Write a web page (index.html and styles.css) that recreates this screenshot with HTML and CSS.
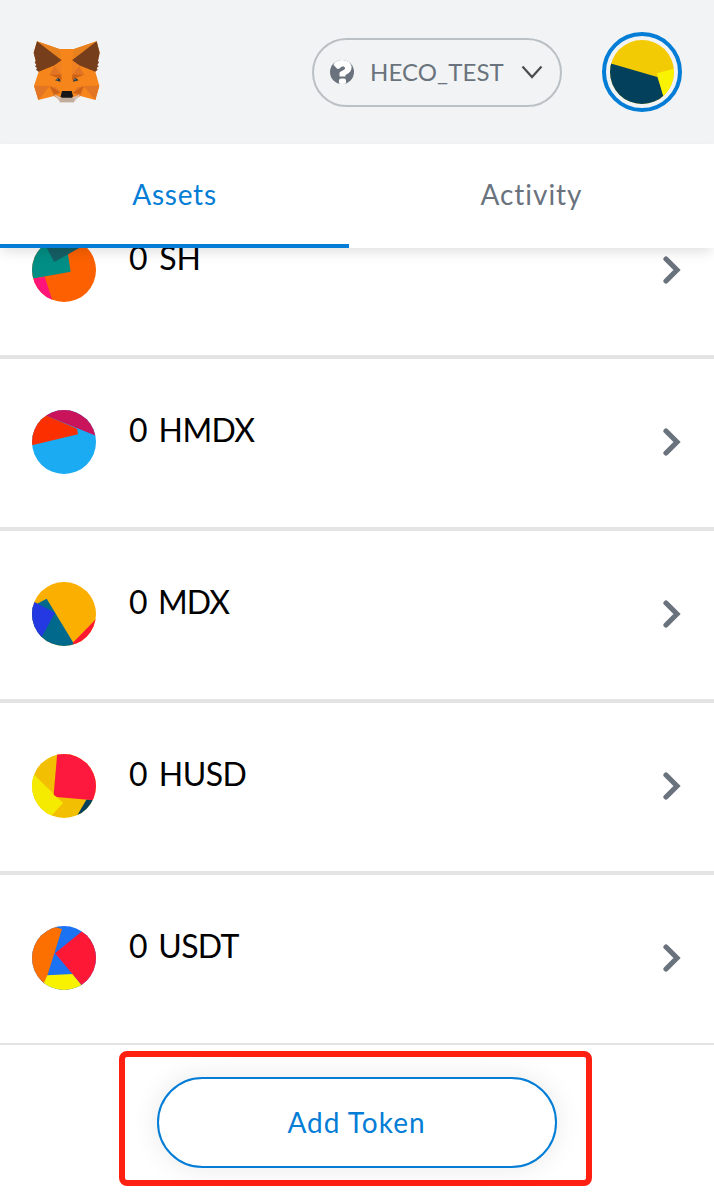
FILE: index.html
```html
<!DOCTYPE html>
<html lang="en">
<head>
<meta charset="utf-8">
<title>Wallet</title>
<link rel="stylesheet" href="styles.css">
</head>
<body>
<div class="app">
  <header class="header">
    <svg class="fox" viewBox="39 33 201 186">
      <path fill="#f6851b" d="M51 34L118 57H162L230 34L239 68L226 125L238 167L226 210L181 198L158 213H122L102 198L55 210L42 167L56 125L41 68Z"/>
      <path fill="#e8821e" d="M51 34L118 57L125 91ZM230 34L162 57L156 91Z"/>
      <path fill="#e27625" d="M42 167L90 168L55 210ZM238 167L190 168L226 210Z"/>
      <path fill="#763e1a" d="M51 34L125 91L104 106L56 125L48 119L51 114L45 109L49 105L44 97L47 93L41 68ZM230 34L156 91L177 106L226 125L233 119L230 114L236 109L232 105L237 97L234 93L239 68Z"/>
      <path fill="#e27525" d="M104 108L88 134L124 133ZM177 108L193 134L157 133ZM88 168L108 172L122 188L102 198ZM193 168L173 172L159 188L181 198Z"/>
      <path fill="#cd6116" d="M90 168L122 188L102 193ZM190 168L159 188L181 193ZM88 134L124 133L125 150L112 143ZM193 134L157 133L156 150L169 143Z"/>
      <path fill="#f6851b" d="M88 134L112 148L122 157L125 183L108 172L90 168ZM193 134L169 148L159 157L156 183L173 172L190 168Z"/>
      <path fill="#f08122" d="M104 106L125 91V133ZM177 106L156 91V133Z"/>
      <path fill="#d5bfb2" d="M102 193L122 202H159L181 193L162 217H120Z"/>
      <path fill="#c0ad9e" d="M119 206L125 202H157L162 206V217H120Z"/>
      <path fill="#161616" d="M126 183H155L159 198L156 203H125L122 199Z"/>
      <path fill="#24343e" d="M105 151L114 144L120 148L122 155ZM176 151L167 144L161 148L159 155Z"/>
      <path fill="#60717d" d="M109 147H114V151H109ZM163 147H168V151H163Z"/>
    </svg>
    <div class="network">
      <svg class="network-icon" viewBox="0 0 24 24">
        <defs><clipPath id="disc"><circle cx="12" cy="12" r="12"/></clipPath></defs>
        <circle cx="12" cy="12" r="12" fill="#6a737d"/>
        <g clip-path="url(#disc)">
          <path fill="#fff" d="M3.500 5L6-1H18L21.500 6C22 10 20 13 15.500 15V16.500H9.500V13C10 11 14.500 10.500 15 8.500C15.500 6 11.500 5.500 9.500 8.500L7.500 9Z"/>
          <rect x="9" y="18.500" width="7" height="6" rx="2" fill="#fff"/>
        </g>
      </svg>
      <span class="network-name">HECO_TEST</span>
      <svg class="caret" viewBox="0 0 22 14"><path d="M1.500 1.500L11 12L20.500 1.500"/></svg>
    </div>
    <div class="avatar">
      <svg viewBox="60 54 192 192"><g clip-path="url(#c0)"><path fill="#f2cb05" d="M60 54H252V246H60Z"/><path fill="#03405b" d="M60 124L202 165L222 226V250H60Z"/><path fill="#f9f200" d="M201 154L254 140V250L219 220Z"/></g><defs><clipPath id="c0"><circle cx="156" cy="150" r="96"/></clipPath></defs></svg>
    </div>
  </header>
  <nav class="tabs">
    <div class="tab tab-active"><span class="tab-assets">Assets</span></div>
    <div class="tab"><span class="tab-activity">Activity</span></div>
  </nav>
  <main class="list">
    <div class="row">
      <svg class="token" viewBox="36 9 192 192"><path fill="#fc6000" d="M36 9H228V201H36Z"/><path fill="#018e84" d="M30 0H135L152 110L30 132Z"/><path fill="#155f65" d="M70 20L103 81L190 32V0Z"/><path fill="#ff1579" d="M30 132L74 125L100 205H30Z"/></svg>
      <span class="amount amount-sh">0 SH</span>
      <svg class="chevron" viewBox="0 0 18 28"><path d="M3 3L14 14L3 25"/></svg>
    </div>
    <div class="row">
      <svg class="token" viewBox="36 30 192 192"><path fill="#1aabf3" d="M36 30H228V222H36Z"/><path fill="#c9145b" d="M60 40L230 108V20H60Z"/><path fill="#fc2f01" d="M30 30L76 46L171 86L174 103L30 137Z"/></svg>
      <span class="amount amount-hmdx">0 HMDX</span>
      <svg class="chevron" viewBox="0 0 18 28"><path d="M3 3L14 14L3 25"/></svg>
    </div>
    <div class="row">
      <svg class="token" viewBox="36 36 192 192"><path fill="#fbaf00" d="M36 36H228V228H36Z"/><path fill="#01698c" d="M50 102L80 86L167 230H36V110Z"/><path fill="#2439e1" d="M36 92L105 128L62 206L30 220Z"/><path fill="#fd1831" d="M160 217L230 145V230H160Z"/></svg>
      <span class="amount amount-mdx">0 MDX</span>
      <svg class="chevron" viewBox="0 0 18 28"><path d="M3 3L14 14L3 25"/></svg>
    </div>
    <div class="row">
      <svg class="token" viewBox="36 42 192 192"><path fill="#f3bf02" d="M36 42H228V234H36Z"/><path fill="#f5eb00" d="M36 98L129 189L90 232H30Z"/><path fill="#fd193e" d="M112 36L101 164L110 171L230 182V36Z"/><path fill="#03405b" d="M199 179L166 236H230V181Z"/></svg>
      <span class="amount amount-husd">0 HUSD</span>
      <svg class="chevron" viewBox="0 0 18 28"><path d="M3 3L14 14L3 25"/></svg>
    </div>
    <div class="row">
      <svg class="token" viewBox="36 33 192 192"><path fill="#1b72f3" d="M36 33H228V225H36Z"/><path fill="#fb7001" d="M30 33L102 35L126 42L73 210L30 220Z"/><path fill="#f8f100" d="M82 181L158 177L200 230H60Z"/><path fill="#fd1936" d="M187 48L105 115L187 212L240 220V30Z"/></svg>
      <span class="amount amount-usdt">0 USDT</span>
      <svg class="chevron" viewBox="0 0 18 28"><path d="M3 3L14 14L3 25"/></svg>
    </div>
  </main>
  <footer class="footer">
    <div class="highlight">
      <div class="add-token"><span>Add Token</span></div>
    </div>
  </footer>
</div>
</body>
</html>
```
FILE: styles.css
```css
* { box-sizing: border-box; }
body {
  margin: 0;
  background: #fff;
  font-family: Lato, "Liberation Sans", sans-serif;
}
svg { display: block; flex: none; }
.app {
  display: flex;
  flex-direction: column;
  width: 714px;
  height: 1200px;
  overflow: hidden;
}
.header {
  display: flex;
  align-items: center;
  flex: none;
  height: 144px;
  padding: 0 32px 0 33px;
  background: #f2f3f4;
}
.fox { width: 67px; height: 62px; }
.network {
  display: flex;
  align-items: center;
  width: 250px;
  height: 69px;
  margin-left: auto;
  margin-right: 40px;
  padding: 0 17px 0 16px;
  border: 2px solid #bbc0c5;
  border-radius: 35px;
}
.network-icon { width: 24px; height: 24px; }
.network-name {
  margin-left: 16px;
  color: #6a737d;
  font-size: 24px;
  line-height: 34px;
  letter-spacing: 0.1px;
  white-space: nowrap;
}
.caret { width: 22px; height: 14px; margin-left: auto; }
.caret path { fill: none; stroke: #4d4d4d; stroke-width: 2.2; }
.avatar {
  display: grid;
  place-items: center;
  width: 80px;
  height: 80px;
  border: 4px solid #037dd6;
  border-radius: 50%;
}
.avatar svg { width: 64px; height: 64px; }
.tabs {
  position: relative;
  z-index: 1;
  display: flex;
  flex: none;
  height: 104px;
  background: #fff;
  box-shadow: 0 6px 12px -2px rgba(0, 0, 0, 0.12);
}
.tab {
  display: flex;
  justify-content: center;
  width: 365px;
  padding-top: 31px;
  color: #6a737d;
  font-size: 28px;
  line-height: 39px;
}
.tab-active {
  width: 349px;
  border-bottom: 4px solid #037dd6;
  color: #037dd6;
}
.tab-assets { letter-spacing: 0.75px; }
.tab-activity { letter-spacing: 0.95px; }
.list {
  flex: none;
  height: 797px;
  overflow: hidden;
  display: flex;
  flex-direction: column;
  justify-content: flex-end;
}
.row {
  display: flex;
  align-items: flex-start;
  flex: none;
  height: 172px;
  padding: 51px 32px 0;
  border-top: 2px solid #e4e4e4;
  border-bottom: 2px solid #e4e4e4;
}
.token { width: 64px; height: 64px; border-radius: 50%; }
.amount {
  margin-left: 33px;
  color: #000;
  font-size: 32px;
  line-height: 40px;
  word-spacing: 4px;
}
.amount-sh { letter-spacing: -0.2px; }
.amount-hmdx { letter-spacing: -0.6px; }
.amount-mdx { letter-spacing: -0.9px; }
.amount-husd { letter-spacing: -0.5px; }
.amount-usdt { letter-spacing: -0.7px; }
.chevron { width: 18px; height: 28px; margin: 18px 1px 0 auto; }
.chevron path { fill: none; stroke: #6a737d; stroke-width: 5.2; stroke-linecap: round; }
.footer { padding: 6px 122px 0 119px; }
.highlight {
  display: flex;
  justify-content: center;
  height: 135px;
  padding: 20px 0 0 2px;
  border: 6px solid #ff2012;
  border-radius: 8px;
}
.add-token {
  display: flex;
  align-items: center;
  justify-content: center;
  width: 400px;
  height: 91px;
  padding-bottom: 2px;
  border: 2px solid #037dd6;
  border-radius: 46px;
  background: #fff;
  box-shadow: 0 0 28px rgba(0, 0, 0, 0.09);
  color: #037dd6;
  font-size: 28px;
  line-height: 40px;
  letter-spacing: 1px;
}
```
